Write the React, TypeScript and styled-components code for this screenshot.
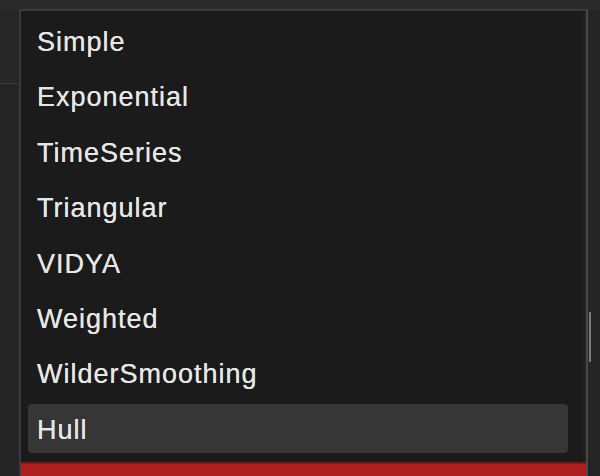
import React from "react";
import styled, { createGlobalStyle } from "styled-components";

const Global = createGlobalStyle`
  html, body { margin: 0; padding: 0; background: #262626; }
  #root { width: 600px; height: 476px; }
`;

const Page = styled.div`
  position: relative;
  width: 600px;
  height: 476px;
  overflow: hidden;
  background: #252525;
  display: flex;
  flex-direction: column;
`;

const TopStrip = styled.div`
  height: 10px;
  background: #2b2b2b;
`;

const Body = styled.div`
  flex: 1;
  display: flex;
`;

const LeftPane = styled.div`
  width: 20px;
  display: flex;
  flex-direction: column;
`;

const LeftHeader = styled.div`
  height: 73px;
  background: #272727;
  border-bottom: 1px solid #3d3d3d;
`;

const Menu = styled.div`
  position: absolute;
  left: 19px;
  top: 9px;
  width: 569px;
  height: 480px;
  background: #1b1b1b;
  border: 2px solid #3a3a3a;
  border-right-color: #4a4a4a;
  box-shadow: inset -3px 0 0 #222;
  display: flex;
  flex-direction: column;
  padding: 5px 18px 0 7px;
  box-sizing: border-box;
`;

const List = styled.div`
  display: flex;
  flex-direction: column;
  gap: 6.4px;
`;

const Item = styled.div<{ $active?: boolean }>`
  height: 49px;
  box-sizing: border-box;
  display: flex;
  align-items: center;
  padding: 4px 0 0 9px;
  border-radius: 4px;
  background: ${(p) => (p.$active ? "#363636" : "transparent")};
  color: #e6e6e6;
  font-family: "Liberation Sans", Arial, sans-serif;
  font-size: 27px;
  letter-spacing: 1px;
  text-shadow: 0 0 0.6px #e6e6e6;
`;

const RedBar = styled.div`
  margin: 9px -18px 0 -7px;
  height: 30px;
  background: linear-gradient(#6a1414 0px, #b01f1f 3px, #b01f1f);
`;

const Thumb = styled.div`
  position: absolute;
  left: 589px;
  top: 312px;
  width: 2px;
  height: 50px;
  background: #7a7a7a;
`;

const items = [
  "Simple",
  "Exponential",
  "TimeSeries",
  "Triangular",
  "VIDYA",
  "Weighted",
  "WilderSmoothing",
  "Hull",
];

export default function App() {
  return (
    <>
      <Global />
      <Page>
        <TopStrip />
        <Body>
          <LeftPane>
            <LeftHeader />
          </LeftPane>
        </Body>
        <Menu>
          <List>
            {items.map((it) => (
              <Item key={it} $active={it === "Hull"}>
                {it}
              </Item>
            ))}
          </List>
          <RedBar />
        </Menu>
        <Thumb />
      </Page>
    </>
  );
}
